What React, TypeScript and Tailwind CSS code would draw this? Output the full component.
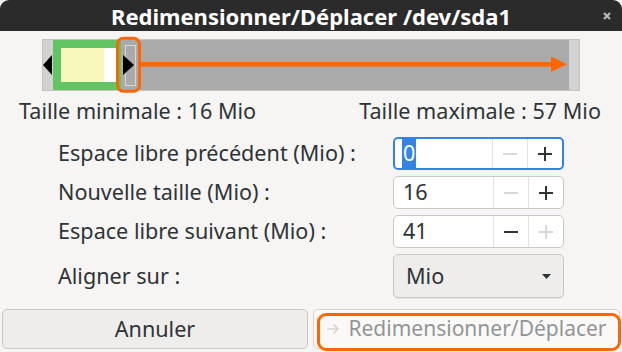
import React from "react";

const font = { fontFamily: '"Noto Sans", "Open Sans", sans-serif' };

function Spin({ value, selected, focused, minusDisabled, plusDisabled }: { value: string; selected?: boolean; focused?: boolean; minusDisabled?: boolean; plusDisabled?: boolean }) {
  return (
    <div className={`flex h-[33px] w-[171px] rounded-[5px] bg-white ${focused ? "border-2 border-[#3584e4]" : "border border-[#cdc7c2]"}`}>
      <div className={`flex flex-1 items-stretch ${focused ? "pl-[7px]" : "pl-[9px]"}`}>
        {selected ? (
          <span className="flex items-center bg-[#3584e4] px-[1px] text-white">{value}</span>
        ) : (
          <span className="flex items-center text-[#2e3436]">{value}</span>
        )}
      </div>
      <div className="flex w-[35px] items-center justify-center border-l border-[#e4e1de]">
        <span className={`block h-[2px] w-[14px] ${minusDisabled ? "bg-[#d8d8d8]" : "bg-[#2e3436]"}`} />
      </div>
      <div className="relative flex w-[35px] items-center justify-center border-l border-[#e4e1de]">
        <span className={`block h-[2px] w-[14px] ${plusDisabled ? "bg-[#d8d8d8]" : "bg-[#2e3436]"}`} />
        <span className={`absolute h-[14px] w-[2px] ${plusDisabled ? "bg-[#d8d8d8]" : "bg-[#2e3436]"}`} />
      </div>
    </div>
  );
}

export default function App() {
  return (
    <div className="flex h-[352px] w-[622px] flex-col overflow-hidden bg-[#f6f5f4] text-[21.6px] text-[#2e3436]" style={font}>
      <div className="relative flex h-[31px] items-center justify-center rounded-t-[9px] bg-[#2b2b2b]">
        <span className="text-[22px] font-bold leading-[28px] text-white">Redimensionner/Déplacer /dev/sda1</span>
        <svg className="absolute left-[603px] top-[12px]" width="8" height="8" viewBox="0 0 8 8">
          <path d="M1 1 L7 7 M7 1 L1 7" stroke="#b8b8b8" strokeWidth="2.2" />
        </svg>
      </div>

      <div className="relative ml-[42px] mt-[8px] flex h-[52px] w-[538px] shrink-0 border border-[#c6c2be] bg-[#aaaaaa]">
        <div className="w-[10px] bg-[#d2d2d2]" />
        <div className="flex w-[68px] bg-[#62c462] py-[8px] pl-[8px] pr-[3px]">
          <div className="w-[43px] bg-[#f8f7bc]" />
          <div className="flex-1 bg-white" />
        </div>
        <div className="flex-1" />
        <div className="w-[10px] bg-[#d2d2d2]" />
        <svg className="absolute left-[-1px] top-[-1px] overflow-visible" width="540" height="54" viewBox="0 0 540 54">
          <rect x="83.5" y="6.5" width="10" height="40" fill="#aaaaaa" stroke="#d6d6d6" />
          <polygon points="10,16 10,36 1,26" fill="#000" />
          <polygon points="81,16 81,36 92,26" fill="#000" />
          <rect x="75.5" y="-0.8" width="22" height="53" rx="6" fill="none" stroke="#ff6600" strokeWidth="3" />
          <rect x="99" y="23" width="412" height="4.6" fill="#ff6600" />
          <polygon points="509,17.5 509,33 525,25.3" fill="#ff6600" />
        </svg>
      </div>

      <div className="mt-[6px] flex justify-between pl-[19px] pr-[21px] leading-[28px]">
        <span>Taille minimale : 16 Mio</span>
        <span>Taille maximale : 57 Mio</span>
      </div>

      <div className="mt-[12px] flex flex-col gap-[6px] pl-[58px]">
        <div className="flex items-center">
          <span className="w-[335px]">Espace libre précédent (Mio) :</span>
          <Spin value="0" selected focused minusDisabled />
        </div>
        <div className="flex items-center">
          <span className="w-[335px]">Nouvelle taille (Mio) :</span>
          <Spin value="16" minusDisabled />
        </div>
        <div className="flex items-center">
          <span className="w-[335px]">Espace libre suivant (Mio) :</span>
          <Spin value="41" plusDisabled />
        </div>
        <div className="flex items-center">
          <span className="w-[335px]">Aligner sur :</span>
          <div className="flex h-[44px] w-[171px] items-center justify-between rounded-[5px] border border-[#cdc7c2] bg-[#efedec] pl-[12px] pr-[12px] shadow-[0_1px_1px_rgba(0,0,0,0.07)]">
            <span>Mio</span>
            <svg width="9" height="5" viewBox="0 0 9 5"><polygon points="0,0 9,0 4.5,5" fill="#2e3436" /></svg>
          </div>
        </div>
      </div>

      <div className="mt-[11px] flex gap-[5px] px-[2px]">
        <div className="flex h-[40px] w-[306px] items-center justify-center rounded-[5px] border border-[#cdc7c2] bg-[#efedec]">Annuler</div>
        <div className="relative flex h-[40px] flex-1 items-center justify-center rounded-[5px] border border-[#d8d4d0] bg-[#faf9f8]">
          <div className="absolute left-[3px] right-[-2px] top-[3px] bottom-[-3px] rounded-[9px] border-[3px] border-[#ff6600]" />
          <svg className="mr-[8px]" width="14" height="12" viewBox="0 0 14 12">
            <path d="M1 6 H12 M7.5 1.5 L12 6 L7.5 10.5" stroke="#d4d4d4" strokeWidth="1.5" fill="none" />
          </svg>
          <span className="text-[21px] text-[#929595]">Redimensionner/Déplacer</span>
        </div>
      </div>
    </div>
  );
}
